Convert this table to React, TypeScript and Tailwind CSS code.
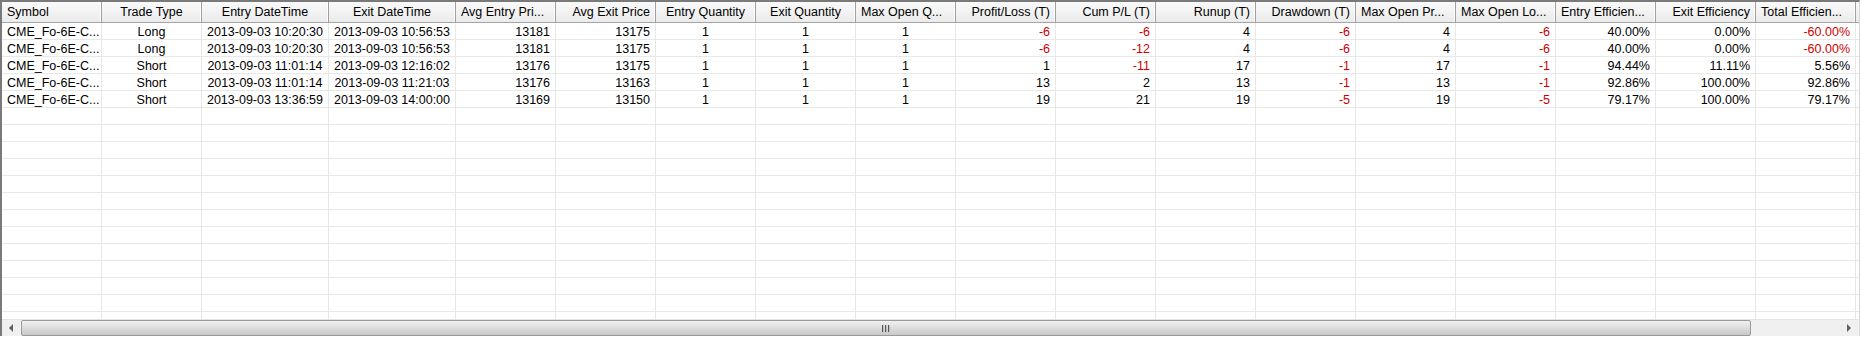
import React from "react";

type Align = "l" | "c" | "r";
const cols: { h: string; w: number; a: Align; ha?: Align }[] = [
  { h: "Symbol", w: 100, a: "l" },
  { h: "Trade Type", w: 100, a: "c" },
  { h: "Entry DateTime", w: 127, a: "c" },
  { h: "Exit DateTime", w: 127, a: "c" },
  { h: "Avg Entry Pri...", w: 100, a: "r", ha: "l" },
  { h: "Avg Exit Price", w: 100, a: "r" },
  { h: "Entry Quantity", w: 100, a: "c" },
  { h: "Exit Quantity", w: 100, a: "c" },
  { h: "Max Open Q...", w: 100, a: "c", ha: "l" },
  { h: "Profit/Loss (T)", w: 100, a: "r" },
  { h: "Cum P/L (T)", w: 100, a: "r" },
  { h: "Runup (T)", w: 100, a: "r" },
  { h: "Drawdown (T)", w: 100, a: "r" },
  { h: "Max Open Pr...", w: 100, a: "r", ha: "l" },
  { h: "Max Open Lo...", w: 100, a: "r", ha: "l" },
  { h: "Entry Efficien...", w: 100, a: "r", ha: "l" },
  { h: "Exit Efficiency", w: 100, a: "r" },
  { h: "Total Efficien...", w: 100, a: "r", ha: "l" },
];

const rows: string[][] = [
  ["CME_Fo-6E-C...", "Long", "2013-09-03 10:20:30", "2013-09-03 10:56:53", "13181", "13175", "1", "1", "1", "-6", "-6", "4", "-6", "4", "-6", "40.00%", "0.00%", "-60.00%"],
  ["CME_Fo-6E-C...", "Long", "2013-09-03 10:20:30", "2013-09-03 10:56:53", "13181", "13175", "1", "1", "1", "-6", "-12", "4", "-6", "4", "-6", "40.00%", "0.00%", "-60.00%"],
  ["CME_Fo-6E-C...", "Short", "2013-09-03 11:01:14", "2013-09-03 12:16:02", "13176", "13175", "1", "1", "1", "1", "-11", "17", "-1", "17", "-1", "94.44%", "11.11%", "5.56%"],
  ["CME_Fo-6E-C...", "Short", "2013-09-03 11:01:14", "2013-09-03 11:21:03", "13176", "13163", "1", "1", "1", "13", "2", "13", "-1", "13", "-1", "92.86%", "100.00%", "92.86%"],
  ["CME_Fo-6E-C...", "Short", "2013-09-03 13:36:59", "2013-09-03 14:00:00", "13169", "13150", "1", "1", "1", "19", "21", "19", "-5", "19", "-5", "79.17%", "100.00%", "79.17%"],
];

const alignCls = (a: Align) =>
  a === "l" ? "justify-start pl-[5px]" : a === "c" ? "justify-center" : "justify-end pr-[5px]";

export default function App() {
  const empty = Array.from({ length: 13 }, () => Array(cols.length).fill(""));
  const all = [...rows, ...empty];
  return (
    <div
      className="w-[1862px] h-[338px] bg-white text-[12.5px] text-black overflow-hidden"
      style={{ fontFamily: '"Liberation Sans", Arial, sans-serif' }}
    >
      <div className="w-[1860px] h-[336px] border-l-2 border-t-2 border-[#7a7a7a] border-r border-r-[#d8d8d8] flex flex-col">
        {/* header */}
        <div className="flex h-[21px] border-b border-[#a5a5a5] bg-gradient-to-b from-[#fafafa] to-[#ebebeb] shrink-0">
          {cols.map((c, i) => (
            <div
              key={i}
              style={{ width: c.w }}
              className={`flex items-center shrink-0 whitespace-nowrap overflow-hidden border-r border-[#a0a0a0] shadow-[inset_-1px_0_0_#ffffff] ${alignCls(c.ha ?? c.a)}`}
            >
              {c.h}
            </div>
          ))}
        </div>
        {/* body */}
        <div className="flex-1 overflow-hidden">
          {all.map((r, ri) => (
            <div key={ri} className="flex h-[17px] border-b border-[#e8e8e8]">
              {cols.map((c, ci) => {
                const v = r[ci];
                const red = ci >= 9 && v.startsWith("-");
                return (
                  <div
                    key={ci}
                    style={{ width: c.w }}
                    className={`flex items-center shrink-0 whitespace-nowrap overflow-hidden border-r border-[#e8e8e8] leading-none pt-[2px] ${alignCls(c.a)} ${red ? "text-[#cc0000]" : ""}`}
                  >
                    {v}
                  </div>
                );
              })}
            </div>
          ))}
        </div>
        {/* horizontal scrollbar */}
        <div className="h-[17px] shrink-0 flex items-stretch bg-[#f0f0f0] border-t border-[#e4e4e4]">
          <div className="w-[19px] flex items-center justify-center">
            <svg width="5" height="8" viewBox="0 0 5 8">
              <path d="M4 0 L0 4 L4 8 Z" fill="#606060" />
            </svg>
          </div>
          <div className="w-[1730px] rounded-[2px] border border-[#9a9a9a] bg-gradient-to-b from-[#f1f1f1] via-[#dcdcdc] to-[#c9c9c9] flex items-center justify-center">
            <svg width="8" height="7" viewBox="0 0 8 7">
              <rect x="0" y="0" width="1.2" height="7" fill="#555" />
              <rect x="3" y="0" width="1.2" height="7" fill="#555" />
              <rect x="6" y="0" width="1.2" height="7" fill="#555" />
            </svg>
          </div>
          <div className="flex-1" />
          <div className="w-[19px] flex items-center justify-center">
            <svg width="5" height="8" viewBox="0 0 5 8">
              <path d="M0 0 L4 4 L0 8 Z" fill="#606060" />
            </svg>
          </div>
        </div>
      </div>
    </div>
  );
}
